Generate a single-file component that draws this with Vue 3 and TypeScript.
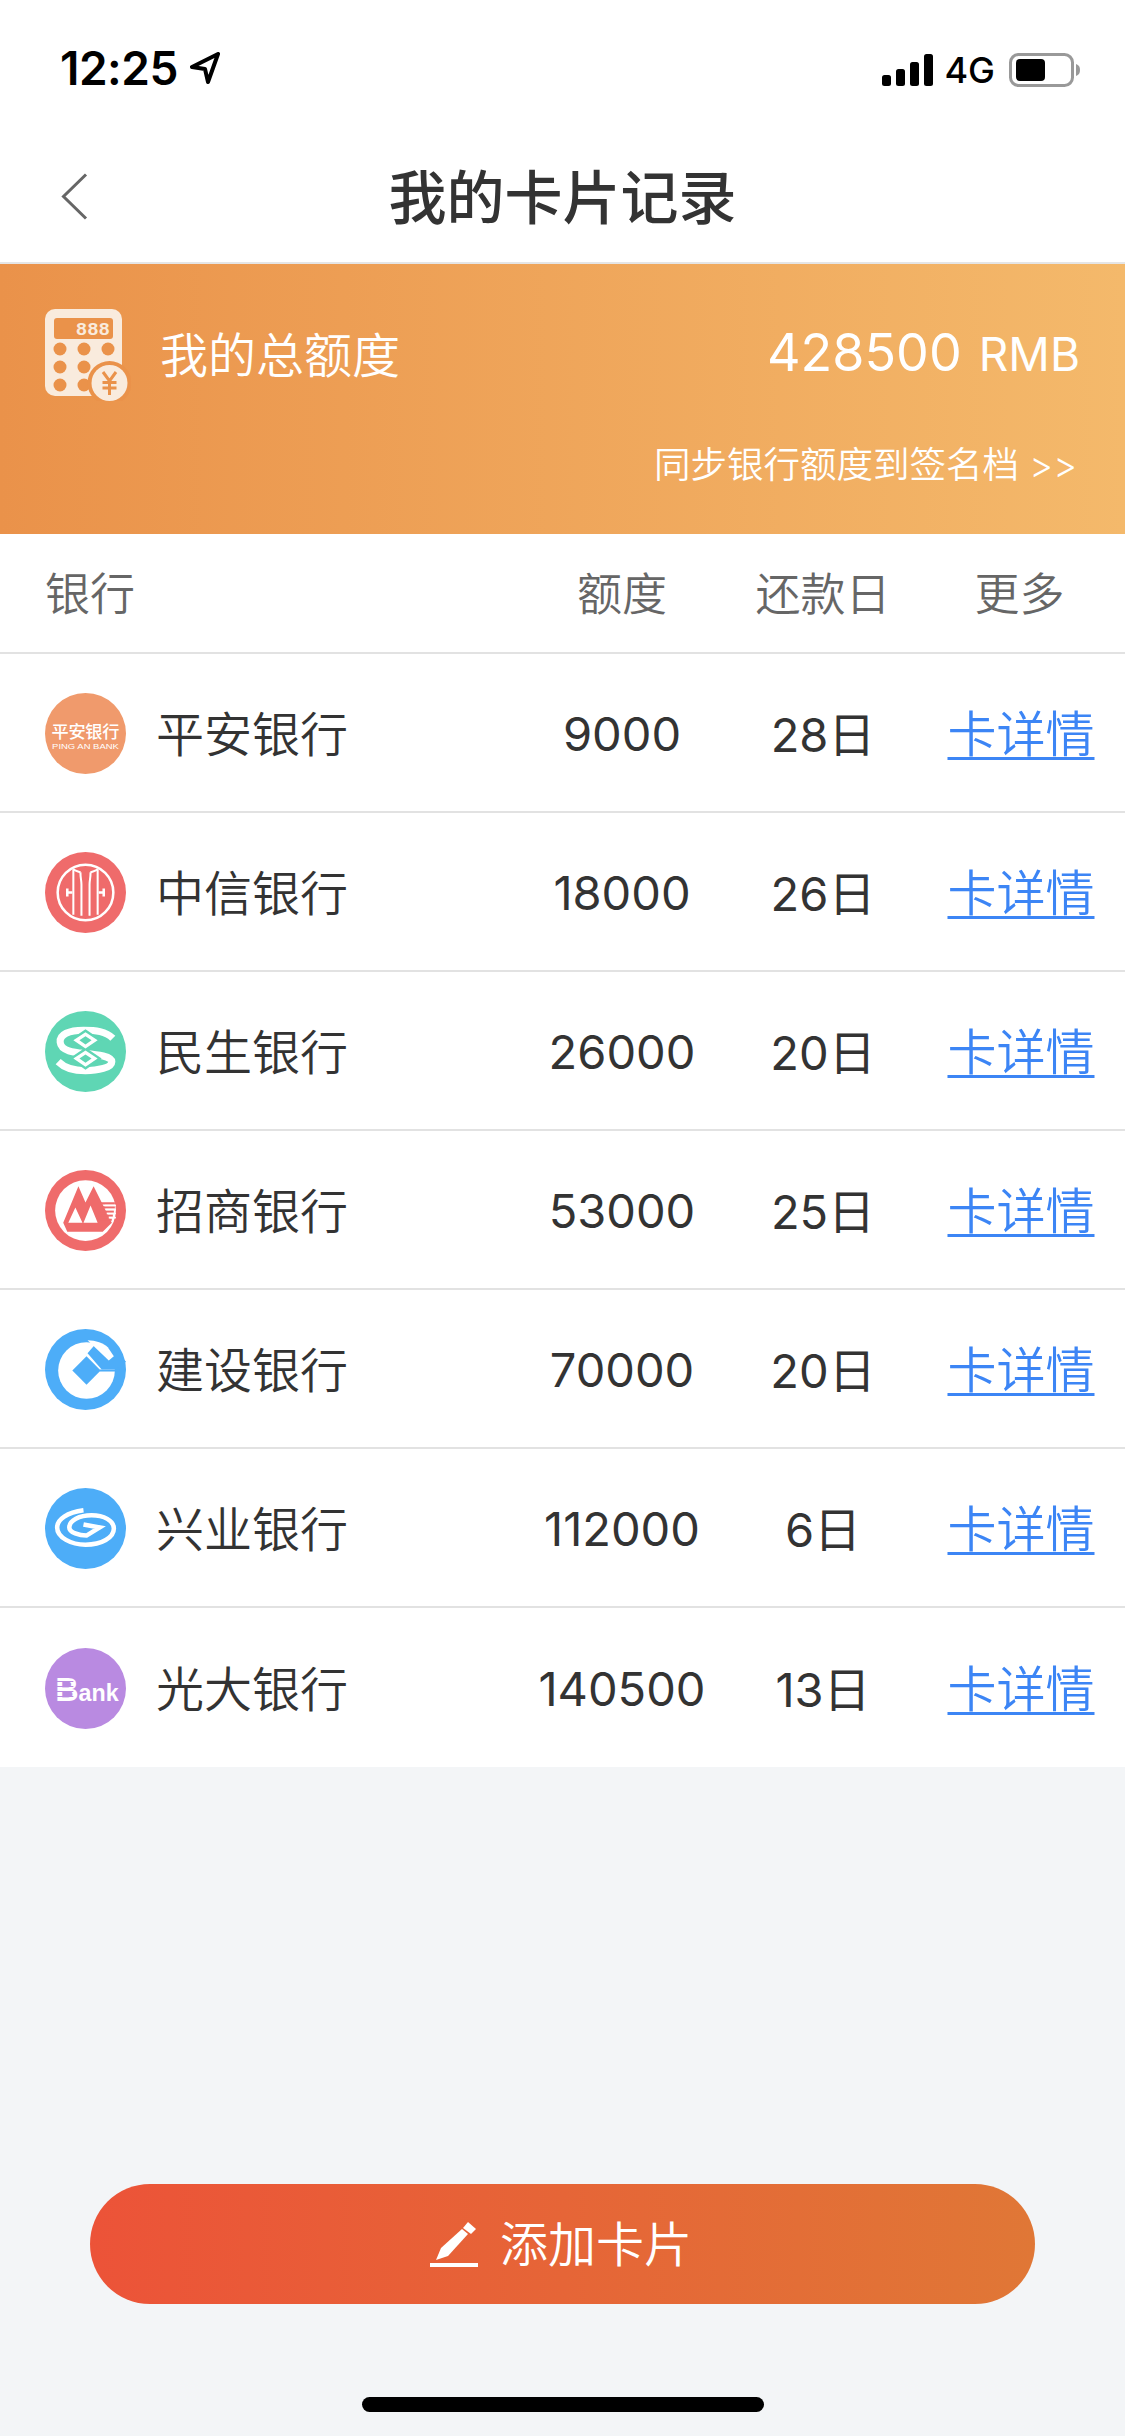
<script setup lang="ts">
interface Bank { name: string; limit: string; day: string; logo: string }
const banks: Bank[] = [
  { name: '平安银行', limit: '9000', day: '28日', logo: 'pingan' },
  { name: '中信银行', limit: '18000', day: '26日', logo: 'citic' },
  { name: '民生银行', limit: '26000', day: '20日', logo: 'minsheng' },
  { name: '招商银行', limit: '53000', day: '25日', logo: 'cmb' },
  { name: '建设银行', limit: '70000', day: '20日', logo: 'ccb' },
  { name: '兴业银行', limit: '112000', day: '6日', logo: 'cib' },
  { name: '光大银行', limit: '140500', day: '13日', logo: 'ceb' },
]
</script>

<template>
  <div class="page">
    <header class="top">
      <div class="status">
        <div class="status-left">
          <span class="time">12:25</span>
          <svg class="loc" width="30" height="32" viewBox="0 0 30 32"><path d="M28 2 L2 15 L15 17 L18 30 Z" fill="none" stroke="#000" stroke-width="4" stroke-linejoin="round"/></svg>
        </div>
        <div class="status-right">
          <svg class="bars" width="51" height="32" viewBox="0 0 51 32"><rect x="0" y="21" width="9" height="11" rx="2.5"/><rect x="14" y="15" width="9" height="17" rx="2.5"/><rect x="28" y="8" width="9" height="24" rx="2.5"/><rect x="42" y="0" width="9" height="32" rx="2.5"/></svg>
          <span class="net">4G</span>
          <svg width="72" height="34" viewBox="0 0 72 34"><rect x="1.5" y="1.5" width="62" height="31" rx="8" fill="none" stroke="#999" stroke-width="3"/><rect x="7" y="6" width="29" height="22" rx="4" fill="#000"/><path d="M67 11 C70 12 71 14 71 17 C71 20 70 22 67 23 Z" fill="#999"/></svg>
        </div>
      </div>
      <div class="nav">
        <svg class="back" width="27" height="47" viewBox="0 0 27 47"><path d="M25 1.5 L2.5 23.5 L25 45.5" fill="none" stroke="#666" stroke-width="3"/></svg>
        <h1 class="title">我的卡片记录</h1>
      </div>
    </header>

    <section class="banner">
      <div class="banner-main">
        <svg class="calc" width="86" height="92" viewBox="0 0 86 92">
          <rect x="0" y="0" width="77" height="87" rx="10" fill="#f9ebdd"/>
          <rect x="9" y="9" width="59" height="21" rx="3" fill="#ea924a"/>
          <text x="65" y="26" text-anchor="end" class="calc-num">888</text>
          <g fill="#ea924a">
            <circle cx="15" cy="40" r="6.5"/><circle cx="39" cy="40" r="6.5"/><circle cx="63" cy="40" r="6.5"/>
            <circle cx="15" cy="58" r="6.5"/><circle cx="39" cy="58" r="6.5"/>
            <circle cx="15" cy="76" r="6.5"/><circle cx="39" cy="76" r="6.5"/>
            <circle cx="64.5" cy="74" r="22"/>
          </g>
          <circle cx="64.5" cy="74" r="18" fill="#f9ebdd"/>
          <path d="M58 63 L64.5 72 L71 63 M64.5 72 V86 M57.5 73.5 H71.5 M57.5 79 H71.5" fill="none" stroke="#ea924a" stroke-width="3"/>
        </svg>
        <span class="banner-label">我的总额度</span>
        <span class="banner-total">428500<small>RMB</small></span>
      </div>
      <div class="banner-sync">同步银行额度到签名档 &gt;&gt;</div>
    </section>

    <section class="table">
      <div class="row head">
        <span>银行</span>
        <span class="c">额度</span>
        <span class="c">还款日</span>
        <span class="c more">更多</span>
      </div>
      <div v-for="b in banks" :key="b.name" class="row item">
        <div class="bank">
          <svg class="logo" width="81" height="81" viewBox="0 0 80 80">
            <template v-if="b.logo === 'pingan'">
              <circle cx="40" cy="40" r="40" fill="#f09a6c"/>
              <text x="6.5" y="44" textLength="67" class="pa-cn">平安银行</text>
              <text x="7" y="55" textLength="66" lengthAdjust="spacingAndGlyphs" class="pa-en">PING AN BANK</text>
            </template>
            <template v-else-if="b.logo === 'citic'">
              <circle cx="40" cy="40" r="40" fill="#ef6b6b"/>
              <circle cx="40" cy="40" r="27.5" fill="none" stroke="#fff" stroke-width="2.5"/>
              <path d="M28 17 V62 M35 20 C35 26 36 28 36 32 V63 M52 17 V62 M45 20 C45 26 44 28 44 32 V63" fill="none" stroke="#fff" stroke-width="2"/>
              <path d="M28 17 C30 19 33 19 35 20 M52 17 C50 19 47 19 45 20" fill="none" stroke="#fff" stroke-width="2"/>
              <path d="M21 40 H27 M22 36 V44 M53 40 H59 M58 36 V44" fill="none" stroke="#fff" stroke-width="2.5"/>
            </template>
            <template v-else-if="b.logo === 'minsheng'">
              <circle cx="40" cy="40" r="40" fill="#5fd6b4"/>
              <path d="M67 27 C60 20 50 19 38 19 C24 19 14 23 15 31 C16 40 30 41 40 42 C52 43 66 45 66 50 C66 56 52 59 40 59 C28 59 19 56 13 50" fill="none" stroke="#fff" stroke-width="7"/>
              <path d="M40 18 L56 29 L40 40 L24 29 Z M40 36 L56 47 L40 58 L24 47 Z" fill="#5fd6b4"/>
              <path d="M40 21 L52 29 L40 37 L28 29 Z M40 39 L52 47 L40 55 L28 47 Z" fill="#fff"/>
              <path d="M40 25 L46 29 L40 33 L34 29 Z M40 43 L46 47 L40 51 L34 47 Z" fill="#5fd6b4"/>
            </template>
            <template v-else-if="b.logo === 'cmb'">
              <circle cx="40" cy="40" r="40" fill="#ef6b6b"/>
              <circle cx="40" cy="40" r="30" fill="#fff"/>
              <path d="M18 52 L33 16 L40 32 L48 16 L66 52 L57 61 H22 Z" fill="#ef6b6b"/>
              <path d="M23 52 L30 37 L37 52 Z M38 52 L45 35 L52 52 Z" fill="#fff"/>
              <path d="M55 33 H69 M55 37 H69 M55 41 H68 M55 45 H67 M55 49 H66" stroke="#ef6b6b" stroke-width="2.2"/>
              <path d="M59 35 H70 M60 39 H70 M61 43 H70 M63 47 H70" stroke="#fff" stroke-width="1.6"/>
            </template>
            <template v-else-if="b.logo === 'ccb'">
              <circle cx="40" cy="40" r="40" fill="#4dadf8"/>
              <circle cx="41" cy="41" r="28" fill="#fff"/>
              <path d="M42 24 L54 10 L80 32 L70 40 H56 Z" fill="#4dadf8"/>
              <path d="M42 11 C50 11 58 14 62 18 L68 27 L63 31 Z" fill="#fff"/>
              <path d="M54 40 H74 V42 H54 Z" fill="#4dadf8"/>
              <path d="M41 27 L55 41 L41 55 L27 41 Z" fill="#4dadf8"/>
            </template>
            <template v-else-if="b.logo === 'cib'">
              <circle cx="40" cy="40" r="40" fill="#4dadf8"/>
              <path d="M38 22 C22 24 12 31 12 39 C12 49 26 56 40 56 C56 56 68 49 68 40 C68 32 58 27 46 27 C34 27 24 32 24 39 C24 44 34 47 41 47 L54 39 L38 36" fill="none" stroke="#fff" stroke-width="4.5"/>
            </template>
            <template v-else>
              <circle cx="40" cy="40" r="40" fill="#b98ae1"/>
              <text x="10" y="52" class="ceb-t"><tspan class="ceb-b">B</tspan>ank</text>
              <path d="M10 33 H28 M10 38 H28 M10 43 H28 M10 48 H28" stroke="#b98ae1" stroke-width="1"/>
            </template>
          </svg>
          <span class="name">{{ b.name }}</span>
        </div>
        <span class="c val">{{ b.limit }}</span>
        <span class="c val day">{{ b.day }}</span>
        <a class="c link" href="#">卡详情</a>
      </div>
    </section>

    <div class="spacer">
      <button class="add">
        <svg width="48" height="46" viewBox="0 0 48 46"><path d="M6 39 L11 27 L32 8 L38 13 L18 35 Z" fill="#fff"/><path d="M38 1 L46 8 L41 13 L33 7 Z" fill="#fff"/><rect x="0" y="42" width="48" height="4" fill="#fff"/></svg>
        <span class="add-text">添加卡片</span>
      </button>
      <div class="home"></div>
    </div>
  </div>
</template>

<style>
html, body { margin: 0; background: #f3f5f7; }
</style>

<style scoped>
.page {
  width: 1125px;
  height: 2436px;
  display: flex;
  flex-direction: column;
  background: #f3f5f7;
  font-family: Inter, "Noto Sans CJK SC", sans-serif;
  overflow: hidden;
}
.top { background: #fff; height: 262px; border-bottom: 2px solid #e5e5e5; }
.status {
  height: 132px;
  box-sizing: border-box;
  padding: 46px 44px 0 60px;
  display: flex;
  justify-content: space-between;
  align-items: flex-start;
}
.status-left { display: flex; align-items: center; gap: 12px; height: 44px; }
.time { font-size: 46px; font-weight: 600; color: #000; letter-spacing: -0.5px; }
.status-right { display: flex; align-items: center; gap: 14px; height: 40px; padding-top: 4px; }
.bars { margin-right: -3px; }
.net { font-size: 36px; font-weight: 500; color: #000; }
.nav { position: relative; height: 130px; display: flex; align-items: center; justify-content: center; }
.back { position: absolute; left: 61px; top: 41px; }
.title { margin: 0; padding-bottom: 7px; font-size: 58px; font-weight: 500; color: #333; font-family: "Noto Sans CJK SC", sans-serif; }
.banner {
  height: 270px;
  box-sizing: border-box;
  padding: 45px 45px 0 45px;
  color: #fff;
  background: linear-gradient(90deg, #ea924a, #f4b96b);
  display: flex;
  flex-direction: column;
}
.banner-main { display: flex; align-items: center; height: 92px; }
.calc { flex: none; }
.calc-num { font-family: "Liberation Mono", monospace; font-size: 19px; font-weight: 700; fill: #f9ebdd; }
.banner-label { margin-left: 29px; padding-bottom: 6px; font-size: 48px; font-family: "Noto Sans CJK SC", sans-serif; font-weight: 350; }
.banner-total { margin-left: auto; padding-bottom: 6px; font-size: 52px; }
.banner-total small { font-size: 46px; margin-left: 17px; }
.banner-sync { margin-top: 35px; text-align: right; font-size: 36.5px; font-weight: 350; margin-right: 3px; }
.table { background: #fff; }
.row {
  display: grid;
  grid-template-columns: 477px 200px 202px 194px;
  padding-left: 45px;
  padding-right: 7px;
  align-items: center;
  box-sizing: border-box;
  border-bottom: 2px solid #e2e2e2;
}
.row:last-child { border-bottom: 0; }
.head { height: 120px; padding-bottom: 4px; font-size: 45px; color: #666; font-family: "Noto Sans CJK SC", sans-serif; font-weight: 350; }
.more { padding-right: 3px; }
.item { height: 159px; }
.bank { display: flex; align-items: center; gap: 30px; }
.logo { flex: none; margin-top: 2px; }
.name { padding-bottom: 4px; font-size: 48px; color: #333; font-family: "Noto Sans CJK SC", sans-serif; font-weight: 350; }
.c { text-align: center; }
.val { padding-top: 2px; font-size: 47px; color: #333; }
.day { padding-top: 0; padding-bottom: 3px; }
.link { padding-bottom: 4px; font-size: 49px; color: #3c85f5; text-decoration: underline; text-decoration-thickness: 3px; text-underline-offset: 5px; font-family: "Noto Sans CJK SC", sans-serif; font-weight: 350; }
.pa-cn { font-family: "Noto Sans CJK SC", sans-serif; font-size: 17px; font-weight: 500; fill: #fff; }
.pa-en { font-family: "Liberation Sans", sans-serif; font-size: 8px; fill: #fff; }
.ceb-b { font-size: 32px; }
.ceb-t { font-family: "Liberation Sans", sans-serif; font-size: 23px; font-weight: 700; fill: #fff; }
.spacer { flex: 1; display: flex; flex-direction: column; align-items: center; }
.add {
  margin-top: 417px;
  width: 945px;
  height: 120px;
  border: 0;
  border-radius: 60px;
  background: linear-gradient(90deg, #ec5338, #e07736);
  color: #fff;
  display: flex;
  align-items: center;
  justify-content: center;
  gap: 22px;
  font-size: 48px;
  font-family: "Noto Sans CJK SC", sans-serif;
  font-weight: 350;
  padding: 0 3px 0 0;
}
.add-text { padding-bottom: 6px; }
.home { width: 402px; height: 15px; border-radius: 8px; background: #000; margin-top: 93px; }
</style>
